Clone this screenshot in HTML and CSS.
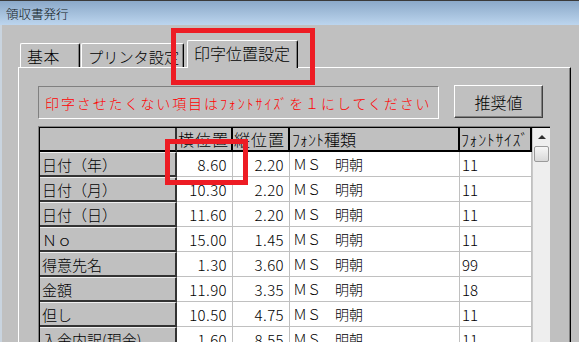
FILE: index.html
```html
<!DOCTYPE html>
<html lang="ja">
<head>
<meta charset="utf-8">
<title>領収書発行</title>
<link rel="stylesheet" href="styles.css">
</head>
<body>
<div class="window">
  <div class="titlebar"><span class="title">領収書発行</span></div>
  <div class="client">
    <div class="tabs">
      <div class="tab tab-basic">基本</div>
      <div class="tab tab-printer">プリンタ設定</div>
      <div class="tab tab-active">印字位置設定</div>
    </div>
    <div class="panel">
      <div class="toolbar">
        <div class="notice">印字させたくない項目はﾌｫﾝﾄｻｲｽﾞを１にしてください</div>
        <button class="btn">推奨値</button>
      </div>
      <div class="grid-frame">
        <div class="grid-inner">
          <div class="grid">
            <div class="c corner"></div>
            <div class="c h h-pos">横位置</div>
            <div class="c h h-pos">縦位置</div>
            <div class="c h h-font">ﾌｫﾝﾄ種類</div>
            <div class="c h h-size">ﾌｫﾝﾄｻｲｽﾞ</div>

            <div class="c rh">日付（年）</div><div class="c num">8.60</div><div class="c num">2.20</div><div class="c txt">ＭＳ　明朝</div><div class="c sz">11</div>
            <div class="c rh">日付（月）</div><div class="c num">10.30</div><div class="c num">2.20</div><div class="c txt">ＭＳ　明朝</div><div class="c sz">11</div>
            <div class="c rh">日付（日）</div><div class="c num">11.60</div><div class="c num">2.20</div><div class="c txt">ＭＳ　明朝</div><div class="c sz">11</div>
            <div class="c rh">Ｎｏ</div><div class="c num">15.00</div><div class="c num">1.45</div><div class="c txt">ＭＳ　明朝</div><div class="c sz">11</div>
            <div class="c rh">得意先名</div><div class="c num">1.30</div><div class="c num">3.60</div><div class="c txt">ＭＳ　明朝</div><div class="c sz">99</div>
            <div class="c rh">金額</div><div class="c num">11.90</div><div class="c num">3.35</div><div class="c txt">ＭＳ　明朝</div><div class="c sz">18</div>
            <div class="c rh">但し</div><div class="c num">10.50</div><div class="c num">4.75</div><div class="c txt">ＭＳ　明朝</div><div class="c sz">11</div>
            <div class="c rh">入金内訳(現金)</div><div class="c num">1.60</div><div class="c num">8.55</div><div class="c txt">ＭＳ　明朝</div><div class="c sz">11</div>
          </div>
          <div class="vscroll">
            <div class="arrow-up"></div>
            <div class="thumb"></div>
          </div>
        </div>
      </div>
    </div>
  </div>
  <div class="mark mark-tab"></div>
  <div class="mark mark-cell"></div>
</div>
</body>
</html>
```

FILE: styles.css
```css
* { box-sizing: border-box; }

html, body {
  margin: 0;
  padding: 0;
  width: 579px;
  height: 342px;
  overflow: hidden;
  background: #c0c0c0;
  font-family: "Noto Sans CJK JP", sans-serif;
  font-weight: 300;
  color: #000;
}

.window {
  position: relative;
  width: 579px;
  height: 342px;
  overflow: hidden;
}

.titlebar {
  height: 25px;
  border-top: 1px solid #3a3a3a;
  background: linear-gradient(#8ba9c9, #bcd5ee);
  display: flex;
  align-items: center;
  padding-left: 6px;
}

.title {
  font-size: 12.5px;
  line-height: 13px;
  color: #101820;
}

.client {
  border-left: 2px solid #c9d4df;
  height: 317px;
}

.tabs {
  height: 42px;
  display: flex;
  align-items: flex-end;
  padding-left: 18px;
}

.tab {
  height: 24px;
  border-top: 1px solid #fff;
  border-left: 1px solid #fff;
  border-right: 1px solid #000;
  box-shadow: inset -1px 0 #808080;
  border-radius: 2px 2px 0 0;
  font-size: 16px;
  display: flex;
  align-items: center;
  padding-left: 6px;
  background: #c0c0c0;
  white-space: nowrap;
  overflow: hidden;
}

.tab-basic { width: 60px; letter-spacing: 0.5px; }
.tab-printer { width: 103px; margin-left: 1px; padding-left: 6px; font-size: 15.2px; }

.tab-active {
  width: 111px;
  height: 28px;
  margin-left: 3px;
  margin-bottom: -1px;
  position: relative;
  z-index: 1;
  padding-bottom: 3px;
}

.panel {
  margin-left: 16px;
  width: 553px;
  height: 275px;
  border-top: 1px solid #fff;
  border-left: 1px solid #fff;
  border-right: 1px solid #000;
  box-shadow: inset -1px 0 #808080;
  padding: 18px 0 0 19px;
}

.toolbar {
  display: flex;
  align-items: flex-start;
}

.notice {
  width: 401px;
  height: 33px;
  border-top: 1px solid #808080;
  border-left: 1px solid #808080;
  border-bottom: 1px solid #fff;
  border-right: 1px solid #fff;
  color: #ff0000;
  font-size: 14px;
  letter-spacing: 1.9px;
  display: flex;
  align-items: center;
  padding-left: 6px;
  white-space: nowrap;
}

.btn {
  margin-left: 15px;
  margin-top: -1px;
  width: 89px;
  height: 33px;
  background: #c0c0c0;
  border: 1px solid;
  border-color: #fff #404040 #404040 #fff;
  box-shadow: inset -1px -1px #808080;
  font-family: "Noto Sans CJK JP", sans-serif;
  font-weight: 300;
  font-size: 16px;
  color: #000;
  padding: 0;
}

.grid-frame {
  margin-top: 7px;
  width: 512px;
  border-top: 1px solid #808080;
  border-left: 1px solid #808080;
}

.grid-inner {
  border-top: 1px solid #000;
  border-left: 1px solid #000;
  display: flex;
  background: #fff;
}

.grid {
  display: grid;
  grid-template-columns: 137px 56px 57px 170px 72px;
  grid-template-rows: 24px;
  grid-auto-rows: 25px;
}

.c {
  display: flex;
  align-items: center;
  white-space: nowrap;
  overflow: hidden;
}

.corner {
  background: #c0c0c0;
  border-right: 2px solid #333;
  border-bottom: 2px solid #000;
}

.h {
  background: #c0c0c0;
  border-right: 2px solid #000;
  border-bottom: 2px solid #000;
  font-size: 16px;
  padding-left: 1px;
}

.h-pos { letter-spacing: 1px; }
.h-font { padding-left: 2px; }
.h-size { letter-spacing: 0.6px; padding-left: 1px; }

.rh {
  background: #c0c0c0;
  border-top: 1px solid #f0f0f0;
  border-right: 2px solid #333;
  border-bottom: 2px solid #333;
  font-size: 15px;
  padding-left: 2px;
}

.num, .txt, .sz {
  border-right: 1px solid #c0c0c0;
  border-bottom: 1px solid #c0c0c0;
  background: #fff;
}

.num {
  justify-content: flex-end;
  padding-right: 5px;
  font-size: 15px;
  letter-spacing: 0.4px;
  font-variant-numeric: tabular-nums;
}

.txt {
  font-size: 14px;
  padding-left: 3px;
}

.sz {
  font-size: 15px;
  padding-left: 2px;
}

.vscroll {
  width: 18px;
  background: #eeeeee;
  border-left: 1px solid #c8c8c8;
  display: flex;
  flex-direction: column;
  align-items: center;
}

.arrow-up {
  margin-top: 7px;
  width: 0;
  height: 0;
  border-left: 4px solid transparent;
  border-right: 4px solid transparent;
  border-bottom: 4px solid #303030;
}

.thumb {
  margin-top: 7px;
  width: 15px;
  height: 16px;
  border: 1px solid #9a9a9a;
  border-radius: 2px;
  background: linear-gradient(#f6f6f6, #d8d8d8);
}

.mark {
  position: absolute;
  border: 5px solid #ed1c24;
}

.mark-tab {
  left: 171px;
  top: 28px;
  width: 144px;
  height: 57px;
}

.mark-cell {
  left: 165px;
  top: 139px;
  width: 83px;
  height: 46px;
}
```
